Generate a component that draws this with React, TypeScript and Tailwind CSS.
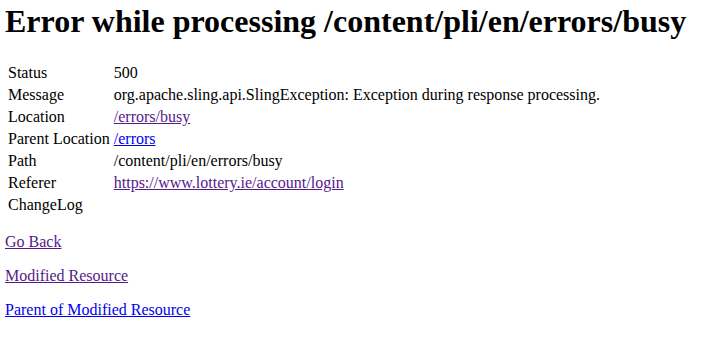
const rows: { label: string; value: string; href?: string; visited?: boolean }[] = [
  { label: "Status", value: "500" },
  { label: "Message", value: "org.apache.sling.api.SlingException: Exception during response processing." },
  { label: "Location", value: "/errors/busy", href: "#", visited: true },
  { label: "Parent Location", value: "/errors", href: "#" },
  { label: "Path", value: "/content/pli/en/errors/busy" },
  { label: "Referer", value: "https://www.lottery.ie/account/login", href: "#", visited: true },
  { label: "ChangeLog", value: "" },
];

const visitedLink = "text-[#551a8b] underline";
const link = "text-[#0000ee] underline";

export default function App() {
  return (
    <div
      className="min-h-[337px] bg-white px-[5px] pt-[3px] text-[16px] leading-[18px] text-black"
      style={{ fontFamily: '"Liberation Serif", "Times New Roman", serif' }}
    >
      <h1 className="mb-[21px] text-[32px] font-bold leading-[37px]">
        Error while processing /content/pli/en/errors/busy
      </h1>

      <table className="border-separate border-spacing-[2px]">
        <tbody>
          {rows.map((r) => (
            <tr key={r.label}>
              <td className="p-[1px] align-middle whitespace-nowrap">{r.label}</td>
              <td className="p-[1px] align-middle h-[20px]">
                {r.href ? (
                  <a href={r.href} className={r.visited ? visitedLink : link}>
                    {r.value}
                  </a>
                ) : (
                  r.value
                )}
              </td>
            </tr>
          ))}
        </tbody>
      </table>

      <p className="my-[16px]">
        <a href="#" className={visitedLink}>Go Back</a>
      </p>
      <p className="my-[16px]">
        <a href="#" className={visitedLink}>Modified Resource</a>
      </p>
      <p className="my-[16px]">
        <a href="#" className={link}>Parent of Modified Resource</a>
      </p>
    </div>
  );
}
